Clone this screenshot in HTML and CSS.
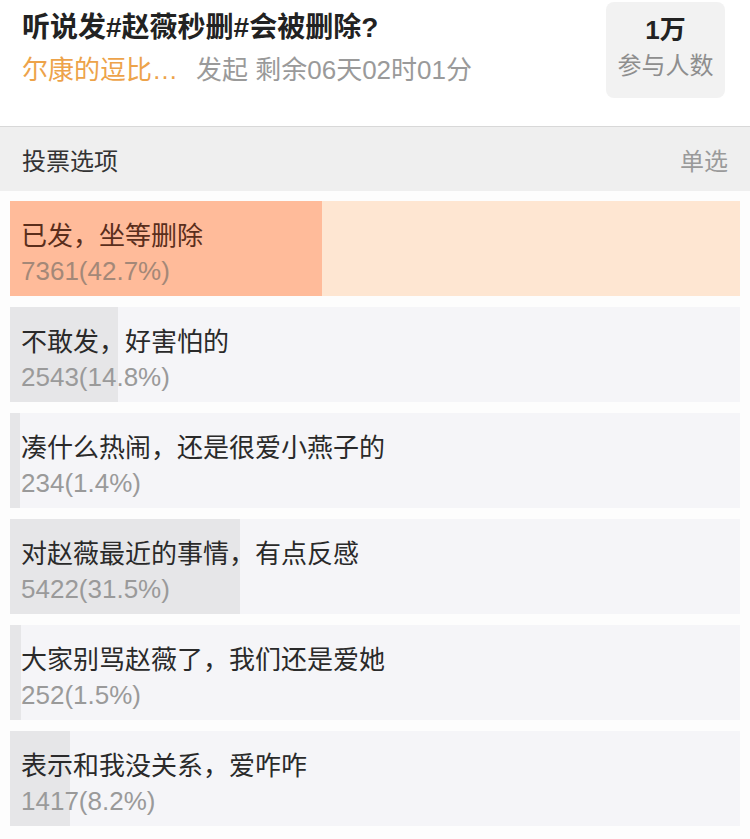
FILE: index.html
```html
<!DOCTYPE html>
<html lang="zh">
<head>
  <meta charset="UTF-8" />
  <meta name="viewport" content="width=device-width, initial-scale=1" />
  <title>投票</title>
  <link rel="stylesheet" href="styles.css">
</head>
<body>
  <div class="header">
    <div class="info">
      <div class="title">听说发#赵薇秒删#会被删除?</div>
      <div class="meta"><span class="author">尔康的逗比…</span><span class="time">发起 剩余06天02时01分</span></div>
    </div>
    <div class="count">
      <div class="count-num">1万</div>
      <div class="count-label">参与人数</div>
    </div>
  </div>

  <div class="section">
    <span>投票选项</span>
    <span class="mode">单选</span>
  </div>

  <div class="options">
    <div class="option top">
      <div class="bar" style="width: 42.7%;"></div>
      <div class="text">已发，坐等删除</div>
      <div class="num">7361(42.7%)</div>
    </div>
    <div class="option">
      <div class="bar" style="width: 14.8%;"></div>
      <div class="text">不敢发，好害怕的</div>
      <div class="num">2543(14.8%)</div>
    </div>
    <div class="option">
      <div class="bar" style="width: 1.4%;"></div>
      <div class="text">凑什么热闹，还是很爱小燕子的</div>
      <div class="num">234(1.4%)</div>
    </div>
    <div class="option">
      <div class="bar" style="width: 31.5%;"></div>
      <div class="text">对赵薇最近的事情，有点反感</div>
      <div class="num">5422(31.5%)</div>
    </div>
    <div class="option">
      <div class="bar" style="width: 1.5%;"></div>
      <div class="text">大家别骂赵薇了，我们还是爱她</div>
      <div class="num">252(1.5%)</div>
    </div>
    <div class="option">
      <div class="bar" style="width: 8.2%;"></div>
      <div class="text">表示和我没关系，爱咋咋</div>
      <div class="num">1417(8.2%)</div>
    </div>
  </div>
</body>
</html>
```

FILE: styles.css
```css
html, body {
  margin: 0;
  padding: 0;
  font-family: "Liberation Sans", "Noto Sans CJK SC", sans-serif;
  background-color: #fdfdfd;
  overflow: hidden;
}

.header {
  height: 126px;
  display: flex;
  justify-content: space-between;
  align-items: flex-start;
  padding: 0 25px 0 22px;
  background: #ffffff;
  border-bottom: 1px solid #d8d8d8;
}

.title {
  margin-top: 8px;
  font-size: 28px;
  line-height: 40px;
  font-weight: bold;
  color: #222;
}

.meta {
  margin-top: 2px;
  font-size: 26px;
  line-height: 40px;
}

.author {
  color: #eda34a;
  margin-right: 18px;
}

.time {
  color: #9a9a9a;
}

.count {
  margin-top: 2px;
  width: 119px;
  height: 96px;
  border-radius: 8px;
  background: #f2f2f2;
  text-align: center;
  box-sizing: border-box;
  padding-top: 10px;
}

.count-num {
  font-size: 26px;
  line-height: 36px;
  font-weight: bold;
  color: #222;
}

.count-label {
  font-size: 24px;
  line-height: 36px;
  color: #8e8e8e;
}

.section {
  height: 64px;
  display: flex;
  align-items: center;
  justify-content: space-between;
  padding: 0 22px 0 22px;
  background: #efefef;
  font-size: 24px;
  color: #333;
}

.mode {
  color: #9a9a9a;
}

.options {
  display: flex;
  flex-direction: column;
  gap: 11px;
  padding: 10px 10px 0 10px;
}

.option {
  position: relative;
  height: 95px;
  background: #f5f5f8;
  padding: 17px 12px 0 11px;
  box-sizing: border-box;
}

.option .bar {
  position: absolute;
  left: 0;
  top: 0;
  bottom: 0;
  background: #e6e6e8;
}

.option.top {
  background: #fee6d2;
}

.option.top .bar {
  background: #ffbb9a;
}

.text,
.num {
  position: relative;
}

.text {
  font-size: 26px;
  line-height: 36px;
  color: #2a2a2a;
}

.num {
  font-size: 26px;
  line-height: 34px;
  color: #9a9a9a;
}

.option.top .text {
  color: #5a2e1c;
}

.option.top .num {
  color: #a48878;
}
```
